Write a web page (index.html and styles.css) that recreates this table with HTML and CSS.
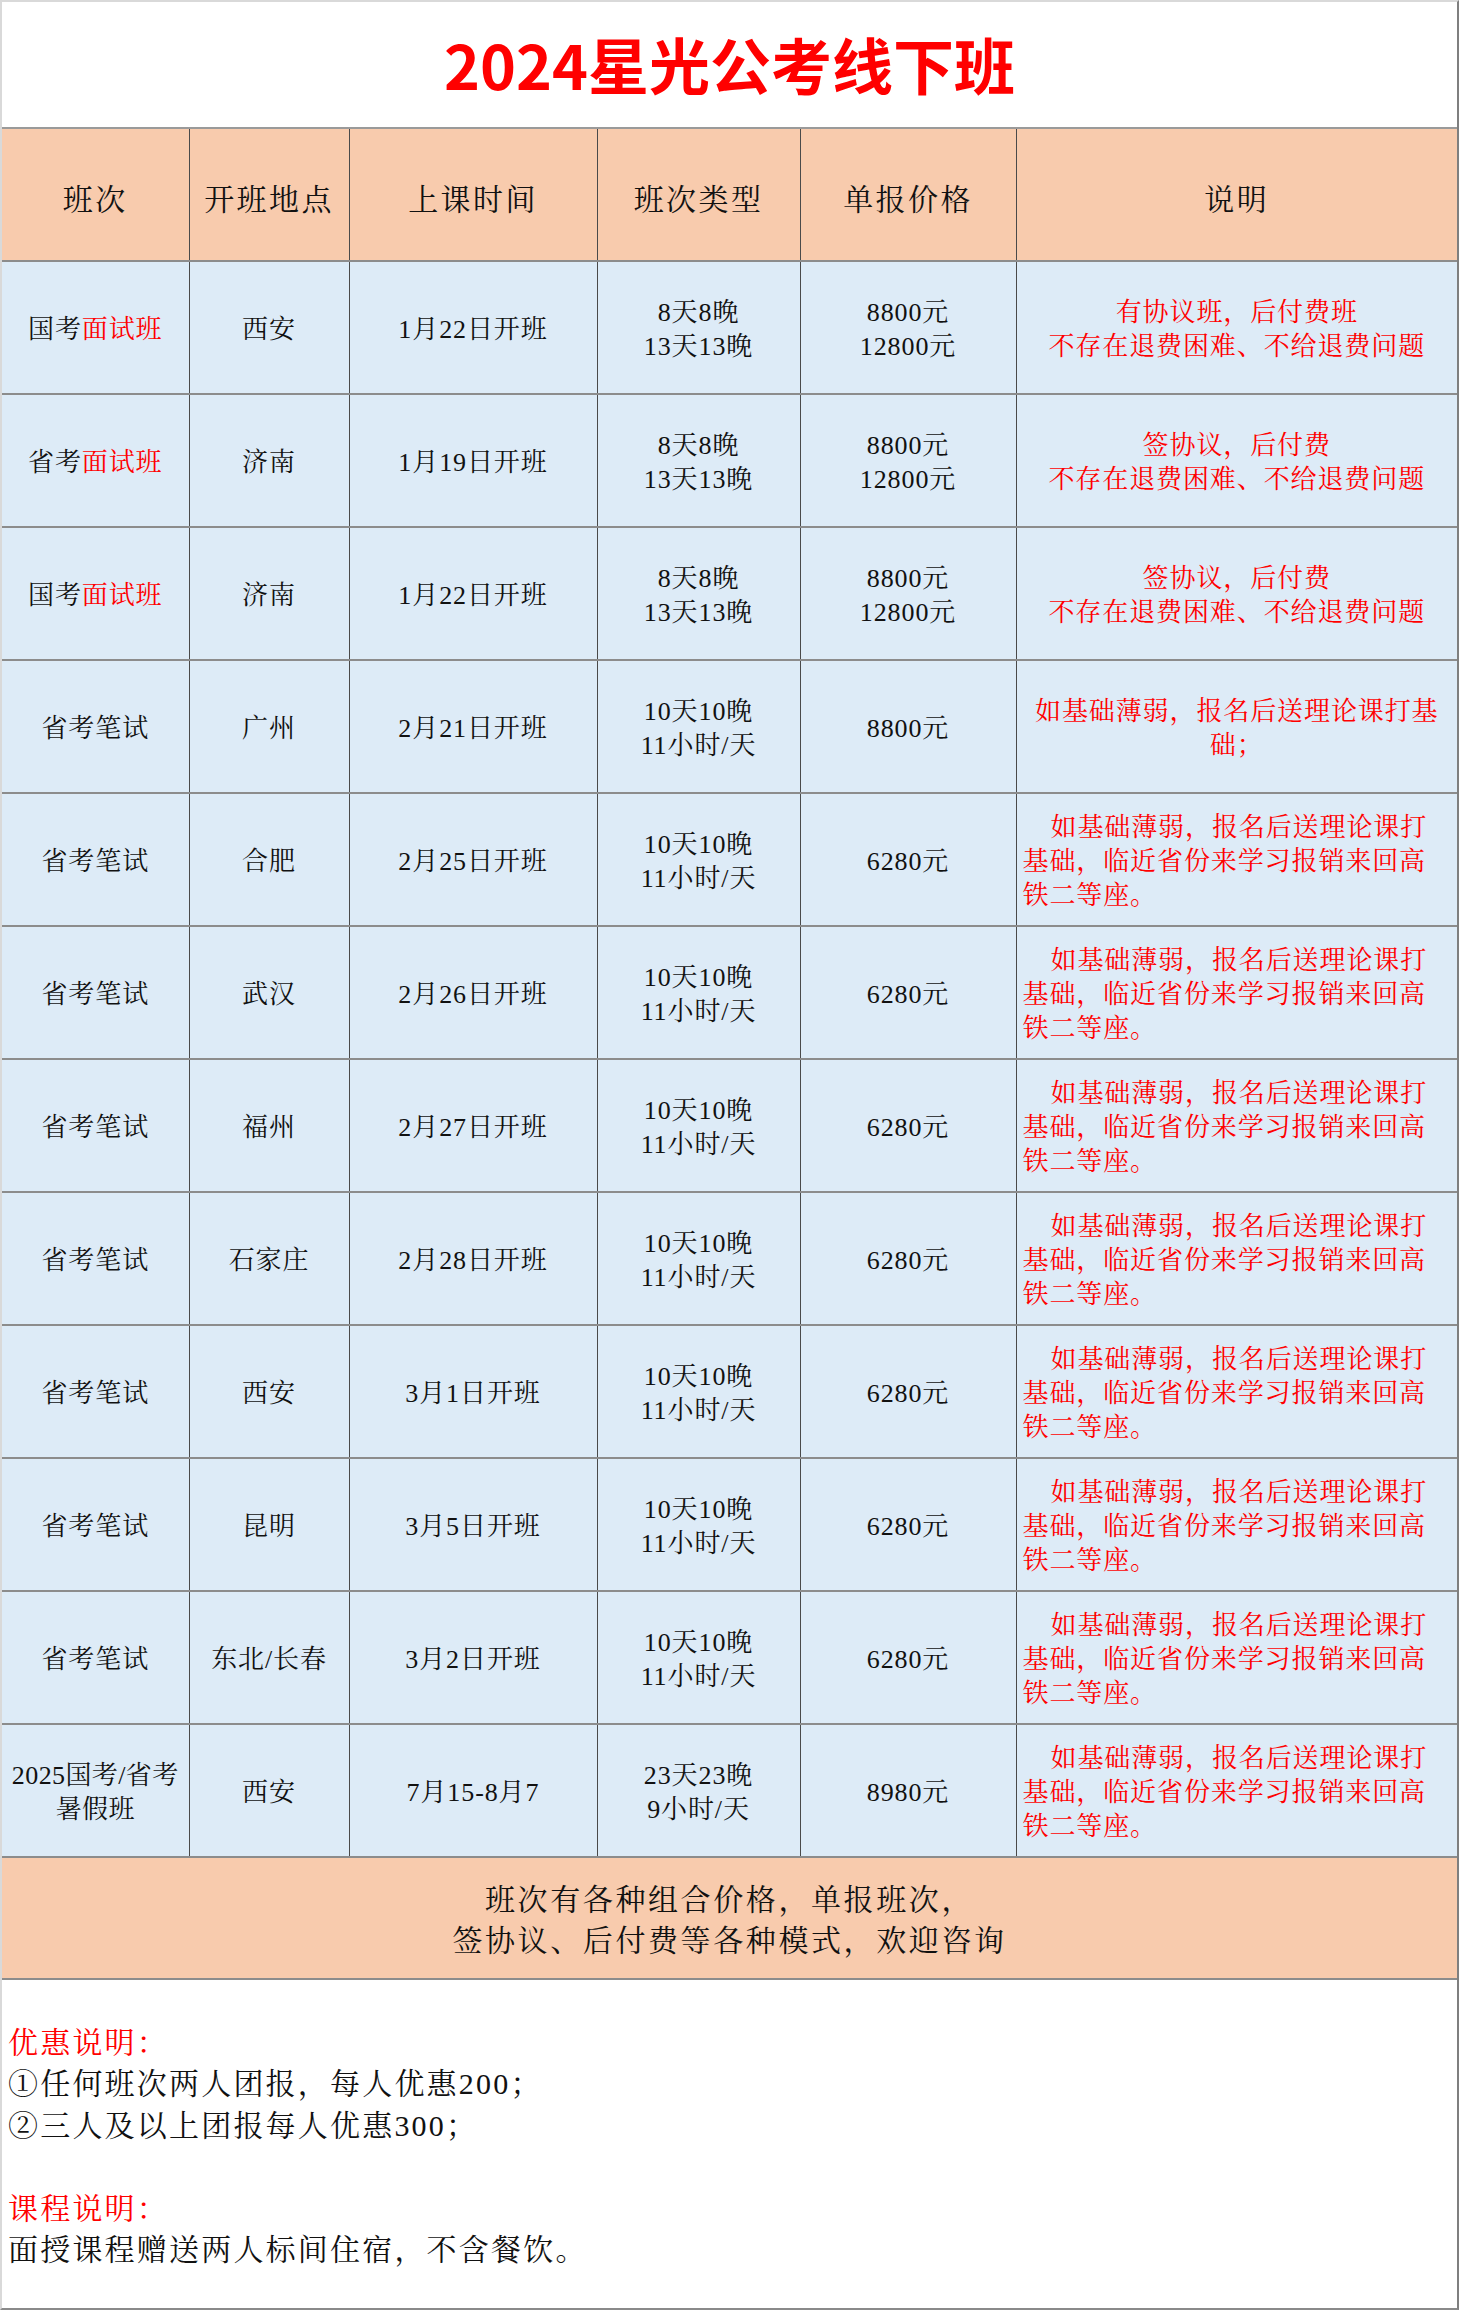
FILE: index.html
```html
<!DOCTYPE html>
<html lang="zh-CN">
<head>
<meta charset="utf-8">
<title>2024星光公考线下班</title>
<link rel="stylesheet" href="styles.css">
</head>
<body>
<div class="sheet">
  <div class="title">2024星光公考线下班</div>
  <table class="grid">
    <colgroup>
      <col class="c1"><col class="c2"><col class="c3"><col class="c4"><col class="c5"><col class="c6">
    </colgroup>
    <thead>
      <tr class="head">
        <th>班次</th><th>开班地点</th><th>上课时间</th><th>班次类型</th><th>单报价格</th><th>说明</th>
      </tr>
    </thead>
    <tbody>
      <tr>
        <td>国考<span class="red">面试班</span></td><td>西安</td><td>1月22日开班</td>
        <td>8天8晚<br>13天13晚</td><td>8800元<br>12800元</td>
        <td class="desc red">有协议班，后付费班<br>不存在退费困难、不给退费问题</td>
      </tr>
      <tr>
        <td>省考<span class="red">面试班</span></td><td>济南</td><td>1月19日开班</td>
        <td>8天8晚<br>13天13晚</td><td>8800元<br>12800元</td>
        <td class="desc red">签协议，后付费<br>不存在退费困难、不给退费问题</td>
      </tr>
      <tr>
        <td>国考<span class="red">面试班</span></td><td>济南</td><td>1月22日开班</td>
        <td>8天8晚<br>13天13晚</td><td>8800元<br>12800元</td>
        <td class="desc red">签协议，后付费<br>不存在退费困难、不给退费问题</td>
      </tr>
      <tr>
        <td>省考笔试</td><td>广州</td><td>2月21日开班</td>
        <td>10天10晚<br>11小时/天</td><td>8800元</td>
        <td class="desc red">如基础薄弱，报名后送理论课打基础；</td>
      </tr>
      <tr>
        <td>省考笔试</td><td>合肥</td><td>2月25日开班</td>
        <td>10天10晚<br>11小时/天</td><td>6280元</td>
        <td class="desc red left">如基础薄弱，报名后送理论课打基础，临近省份来学习报销来回高铁二等座。</td>
      </tr>
      <tr>
        <td>省考笔试</td><td>武汉</td><td>2月26日开班</td>
        <td>10天10晚<br>11小时/天</td><td>6280元</td>
        <td class="desc red left">如基础薄弱，报名后送理论课打基础，临近省份来学习报销来回高铁二等座。</td>
      </tr>
      <tr>
        <td>省考笔试</td><td>福州</td><td>2月27日开班</td>
        <td>10天10晚<br>11小时/天</td><td>6280元</td>
        <td class="desc red left">如基础薄弱，报名后送理论课打基础，临近省份来学习报销来回高铁二等座。</td>
      </tr>
      <tr>
        <td>省考笔试</td><td>石家庄</td><td>2月28日开班</td>
        <td>10天10晚<br>11小时/天</td><td>6280元</td>
        <td class="desc red left">如基础薄弱，报名后送理论课打基础，临近省份来学习报销来回高铁二等座。</td>
      </tr>
      <tr>
        <td>省考笔试</td><td>西安</td><td>3月1日开班</td>
        <td>10天10晚<br>11小时/天</td><td>6280元</td>
        <td class="desc red left">如基础薄弱，报名后送理论课打基础，临近省份来学习报销来回高铁二等座。</td>
      </tr>
      <tr>
        <td>省考笔试</td><td>昆明</td><td>3月5日开班</td>
        <td>10天10晚<br>11小时/天</td><td>6280元</td>
        <td class="desc red left">如基础薄弱，报名后送理论课打基础，临近省份来学习报销来回高铁二等座。</td>
      </tr>
      <tr>
        <td>省考笔试</td><td>东北/长春</td><td>3月2日开班</td>
        <td>10天10晚<br>11小时/天</td><td>6280元</td>
        <td class="desc red left">如基础薄弱，报名后送理论课打基础，临近省份来学习报销来回高铁二等座。</td>
      </tr>
      <tr>
        <td class="tight">2025国考/省考<br>暑假班</td><td>西安</td><td>7月15-8月7</td>
        <td>23天23晚<br>9小时/天</td><td>8980元</td>
        <td class="desc red left">如基础薄弱，报名后送理论课打基础，临近省份来学习报销来回高铁二等座。</td>
      </tr>
    </tbody>
    <tfoot>
      <tr class="foot">
        <td colspan="6">班次有各种组合价格，单报班次，<br>签协议、后付费等各种模式，欢迎咨询</td>
      </tr>
    </tfoot>
  </table>
  <div class="notes">
    <p class="blank">&nbsp;</p>
    <p class="red">优惠说明：</p>
    <p>①任何班次两人团报，每人优惠200；</p>
    <p>②三人及以上团报每人优惠300；</p>
    <p class="blank">&nbsp;</p>
    <p class="red">课程说明：</p>
    <p>面授课程赠送两人标间住宿，不含餐饮。</p>
  </div>
</div>
</body>
</html>
```

FILE: styles.css
```css
html, body {
  margin: 0;
  padding: 0;
  background: #ffffff;
}

body {
  font-family: "Liberation Serif", "Noto Serif CJK SC", "Noto Sans CJK SC", serif;
  color: #111111;
}

.sheet {
  width: 1459px;
  box-sizing: border-box;
  border-top: 2px solid #d9d9d9;
  border-left: 2px solid #d9d9d9;
  border-right: 2px solid #7f7f7f;
  border-bottom: 2px solid #8a8a8a;
  height: 2310px;
  display: flex;
  flex-direction: column;
}

.title {
  height: 125px;
  display: flex;
  align-items: center;
  justify-content: center;
  font-family: "Noto Sans CJK SC", "Liberation Sans", sans-serif;
  font-weight: 700;
  font-size: 61px;
  color: #ff0000;
  padding-bottom: 3px;
  box-sizing: border-box;
}

.grid {
  width: 100%;
  border-collapse: collapse;
  table-layout: fixed;
}

.c1 { width: 187px; }
.c2 { width: 160px; }
.c3 { width: 248px; }
.c4 { width: 203px; }
.c5 { width: 216px; }
.c6 { width: auto; }

.grid th,
.grid td {
  border-left: 1px solid #4a4a4a;
  border-right: 1px solid #4a4a4a;
  border-top: 2px solid #8c8c8c;
  border-bottom: 2px solid #8c8c8c;
  text-align: center;
  vertical-align: middle;
  padding: 4px 4px 0;
}

.grid th:first-child,
.grid td:first-child {
  border-left: none;
}

.grid th:last-child,
.grid td:last-child {
  border-right: none;
}

.head th {
  height: 133px;
  box-sizing: border-box;
  background: #f8cbad;
  font-weight: 400;
  font-size: 30px;
  letter-spacing: 2.4px;
  color: #111111;
  border-top: 2px solid #9a9a9a;
}

.grid tbody td {
  height: 133px;
  box-sizing: border-box;
  background: #ddebf7;
  font-size: 26px;
  letter-spacing: 0.9px;
  line-height: 34px;
}

.grid tbody td.tight {
  padding: 4px 2px 0;
  letter-spacing: 0.4px;
}

.grid tbody td.desc {
  padding: 4px 6px 0;
}

.grid tbody td.left {
  text-align: left;
  text-indent: 28px;
}

.red {
  color: #ff0000;
}

.foot td {
  height: 122px;
  box-sizing: border-box;
  background: #f8cbad;
  font-size: 30px;
  letter-spacing: 2.6px;
  line-height: 41px;
  border-bottom: 2px solid #8c8c8c;
}

.notes {
  padding-left: 6px;
  font-size: 30px;
  letter-spacing: 2.2px;
  line-height: 41.5px;
  color: #111111;
}

.notes p {
  margin: 0;
}

.notes p.red {
  color: #ff0000;
}
```
